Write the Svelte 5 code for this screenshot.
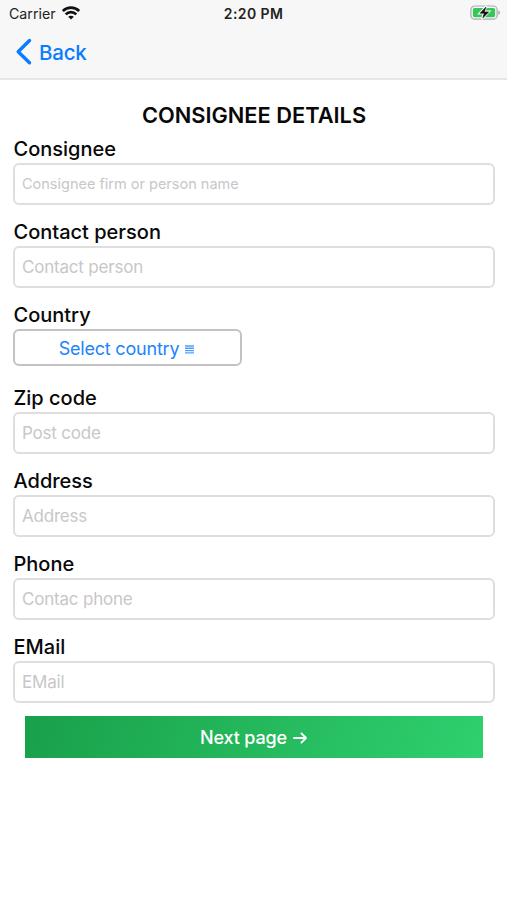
<script>
  const fields = [
    { label: 'Consignee', hint: 'Consignee firm or person name', small: true },
    { label: 'Contact person', hint: 'Contact person' },
    { label: 'Country', select: true },
    { label: 'Zip code', hint: 'Post code' },
    { label: 'Address', hint: 'Address' },
    { label: 'Phone', hint: 'Contac phone' },
    { label: 'EMail', hint: 'EMail' }
  ];
</script>

<div class="screen">
  <header>
    <div class="status">
      <div class="carrier">
        <span>Carrier</span>
        <svg width="18" height="14" viewBox="0 0 18 14" fill="none" stroke="#111" stroke-width="2.7">
          <path d="M0.8 5.1C5.3.5 12.7.5 17.2 5.1" />
          <path d="M3.7 8.4c3-3 7.6-3 10.6 0" />
          <path d="M9 13.6 6.2 10.8c1.6-1.5 4-1.5 5.6 0z" fill="#111" stroke="none" />
        </svg>
      </div>
      <span class="time">2:20 PM</span>
      <div class="battery">
        <svg width="31" height="16" viewBox="0 0 31 16">
          <rect x="0.9" y="1" width="26.2" height="13.2" rx="3.8" fill="#f7f7f7" stroke="#aaa" stroke-width="1.2" />
          <path d="M28.3 5.5c2.3.7 2.3 3.6 0 4.3z" fill="#aaa" />
          <rect x="2.9" y="3" width="22.2" height="9.2" rx="1.8" fill="#35c759" />
          <path d="M16.4.8 9 8.6h4.4l-1.7 5.8 7.9-8h-4.8z" fill="#f7f7f7" stroke="#f7f7f7" stroke-width="1.6" />
          <path d="M15.9 2 10 8.3h4.2l-1.4 4.8 5.9-6.2h-4.3z" fill="#111" stroke="#111" stroke-width="0.5" />
        </svg>
      </div>
    </div>
    <nav>
      <svg width="17" height="28" viewBox="0 0 17 28" fill="none" stroke="#0a7cff" stroke-width="3.4" stroke-linecap="round" stroke-linejoin="round">
        <path d="M14.5 2.5 3.2 13.7 14.5 24.8" />
      </svg>
      <span class="back">Back</span>
    </nav>
  </header>

  <main>
    <h1>CONSIGNEE DETAILS</h1>
    {#each fields as f}
      <div class="field">
        <label for={f.label}>{f.label}</label>
        {#if f.select}
          <button class="select" id={f.label}>
            <span>Select country</span>
            <svg width="9" height="9" viewBox="0 0 9 9" stroke="#4c9fff" stroke-width="1.4">
              <path d="M0 1h9M0 3.3h9M0 5.6h9M0 7.9h9" />
            </svg>
          </button>
        {:else}
          <input id={f.label} class:small={f.small} placeholder={f.hint} />
        {/if}
      </div>
    {/each}
    <button class="next">
      <span>Next page</span>
      <svg width="15" height="14" viewBox="0 0 15 14" fill="none" stroke="#fff" stroke-width="1.9" stroke-linecap="round" stroke-linejoin="round">
        <path d="M1 7h12M8.4 2.4 13 7l-4.6 4.6" />
      </svg>
    </button>
  </main>
</div>

<style>
  :global(body) { margin: 0; background: #fff; }
  .screen {
    width: 507px;
    height: 900px;
    background: #fff;
    font-family: Inter, "Liberation Sans", sans-serif;
    overflow: hidden;
  }
  svg { display: block; flex: none; }
  header {
    box-sizing: border-box;
    height: 80px;
    background: #f7f7f7;
    border-bottom: 2px solid #e6e6e6;
  }
  .status {
    display: grid;
    grid-template-columns: 1fr auto 1fr;
    height: 26px;
    padding: 0 6px 0 9px;
    align-items: center;
    color: #222;
  }
  .carrier { display: flex; align-items: center; gap: 6px; font-size: 14.2px; }
  .carrier span, .time { line-height: 18px; padding-top: 2px; }
  .time { font-size: 14px; font-weight: 600; letter-spacing: 0.4px; margin-left: -3px; }
  .battery { display: flex; justify-content: flex-end; }
  nav { display: flex; align-items: center; gap: 7px; height: 52px; padding-left: 15px; color: #0a7cff; }
  .back { font-size: 20.5px; font-weight: 550; letter-spacing: -0.2px; }
  main { padding: 21px 12px 0 13px; }
  h1 { margin: 0; height: 28px; line-height: 28px; font-size: 21.8px; font-weight: 600; text-align: center; color: #080808; }
  .field { height: 83px; }
  label { display: block; height: 34px; line-height: 40px; padding-left: 0.5px; font-size: 20px; font-weight: 500; color: #080808; }
  input, .select {
    display: block;
    box-sizing: border-box;
    width: 100%;
    height: 42px;
    margin: 0;
    padding: 0 7px;
    border: 2px solid #dedede;
    border-radius: 6px;
    background: #fff;
    font: 400 17px Inter, sans-serif;
    letter-spacing: -0.2px;
  }
  input::placeholder { color: #c7c7ca; opacity: 1; }
  input.small { font-size: 14.5px; letter-spacing: 0; padding-bottom: 2px; }
  .select {
    display: flex;
    align-items: center;
    justify-content: center;
    gap: 6px;
    width: 229px;
    height: 37px;
    padding-right: 9px;
    border-color: #c3c3c3;
    color: #1c84fb;
    font-size: 18px;
  }
  .select span { padding-top: 1px; }
  .select svg { margin-top: 4px; }
  .next {
    display: flex;
    align-items: center;
    justify-content: center;
    gap: 6px;
    width: 458px;
    height: 42px;
    margin: 6px 0 0 12px;
    padding: 1px 0 0;
    border: 0;
    background: linear-gradient(110deg, #19a04a, #2fd06e);
    color: #fff;
    font: 500 18px Inter, sans-serif;
    letter-spacing: -0.15px;
  }
</style>
